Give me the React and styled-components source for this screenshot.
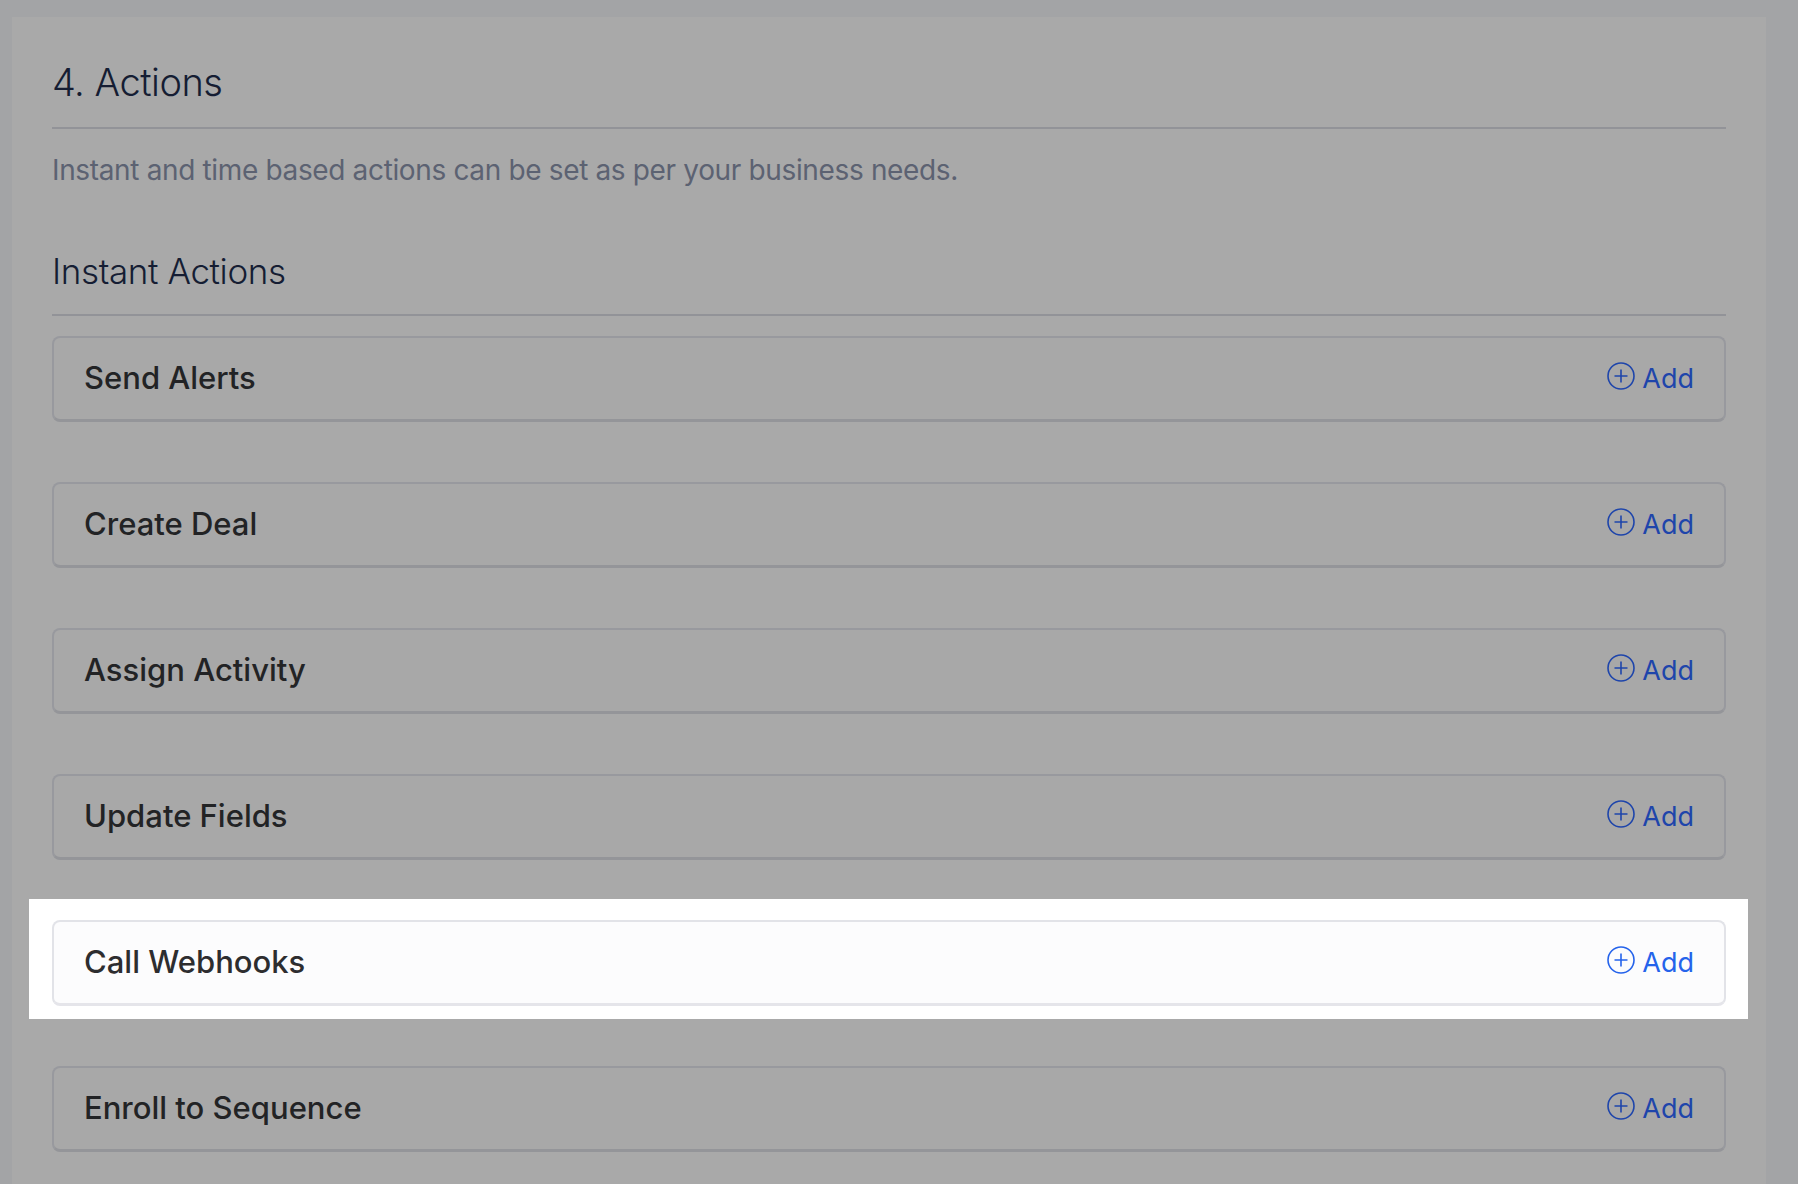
import React from "react";
import styled, { createGlobalStyle } from "styled-components";

const GlobalStyle = createGlobalStyle`
  html, body {
    margin: 0;
    padding: 0;
    height: 1184px;
    overflow: hidden;
    background: #a3a4a6;
    font-family: Inter, "Liberation Sans", sans-serif;
  }
  * {
    box-sizing: border-box;
  }
`;

const Page = styled.div`
  padding: 17px 32px 0 12px;
  height: 1184px;
  overflow: hidden;
`;

const Panel = styled.section`
  background: #a9a9a9;
  padding: 40px 40px 0 40px;
  height: 1167px;
`;

const Title = styled.h2`
  margin: 0;
  height: 72px;
  line-height: 50px;
  font-size: 38px;
  font-weight: 300;
  letter-spacing: -0.5px;
  color: #151d33;
  border-bottom: 2px solid #929398;
`;

const Subtitle = styled.p`
  margin: 0;
  padding-top: 21px;
  line-height: 40px;
  font-size: 28px;
  font-weight: 400;
  letter-spacing: -0.35px;
  color: #5c6272;
`;

const SubTitle = styled.h3`
  margin: 59px 0 0;
  height: 67px;
  line-height: 44px;
  font-size: 35px;
  font-weight: 300;
  letter-spacing: -0.4px;
  color: #151d33;
  border-bottom: 2px solid #929398;
`;

const List = styled.div`
  display: flex;
  flex-direction: column;
  margin-top: 20px;
`;

const Spotlight = styled.div`
  background: ${(p) => (p.$lit ? "#ffffff" : "transparent")};
  margin: ${(p) => (p.$first ? "-21px" : "39px")} -22px -13px -23px;
  padding: 21px 22px 13px 23px;
`;

const Row = styled.div`
  display: flex;
  align-items: center;
  justify-content: space-between;
  height: 86px;
  padding: 0 30px;
  border-radius: 8px;
  border: 2px solid ${(p) => (p.$lit ? "#e2e3e8" : "#98999e")};
  border-bottom-width: 3px;
  border-bottom-color: ${(p) => (p.$lit ? "#e5e5ea" : "#949599")};
  background: ${(p) => (p.$lit ? "#fcfcfd" : "#a8a8a8")};
`;

const Label = styled.span`
  margin-top: -3px;
  font-size: 31px;
  font-weight: 500;
  color: ${(p) => (p.$lit ? "#2d2d2f" : "#222325")};
`;

const AddButton = styled.button`
  display: flex;
  align-items: center;
  gap: 7px;
  padding: 0;
  border: 0;
  background: none;
  font: 400 27px Inter, "Liberation Sans", sans-serif;
  color: ${(p) => (p.$lit ? "#2563eb" : "#1e45ab")};
`;

const PlusIcon = styled.svg`
  display: block;
  width: 28px;
  height: 28px;
  margin-top: -5px;
`;

const Plus = () => (
  <PlusIcon viewBox="0 0 28 28" fill="none" stroke="currentColor" strokeWidth="1.6">
    <circle cx="14" cy="14" r="13" />
    <path d="M14 7.5v13M7.5 14h13" />
  </PlusIcon>
);

const actions = [
  "Send Alerts",
  "Create Deal",
  "Assign Activity",
  "Update Fields",
  "Call Webhooks",
  "Enroll to Sequence",
];

const App = () => {
  return (
    <Page>
      <GlobalStyle />
      <Panel>
        <Title>4. Actions</Title>
        <Subtitle>Instant and time based actions can be set as per your business needs.</Subtitle>
        <SubTitle>Instant Actions</SubTitle>
        <List>
          {actions.map((name, index) => {
            const lit = name === "Call Webhooks";
            return (
              <Spotlight key={name} $lit={lit} $first={index === 0}>
                <Row $lit={lit}>
                  <Label $lit={lit}>{name}</Label>
                  <AddButton $lit={lit} type="button">
                    <Plus />
                    Add
                  </AddButton>
                </Row>
              </Spotlight>
            );
          })}
        </List>
      </Panel>
    </Page>
  );
};

export default App;
